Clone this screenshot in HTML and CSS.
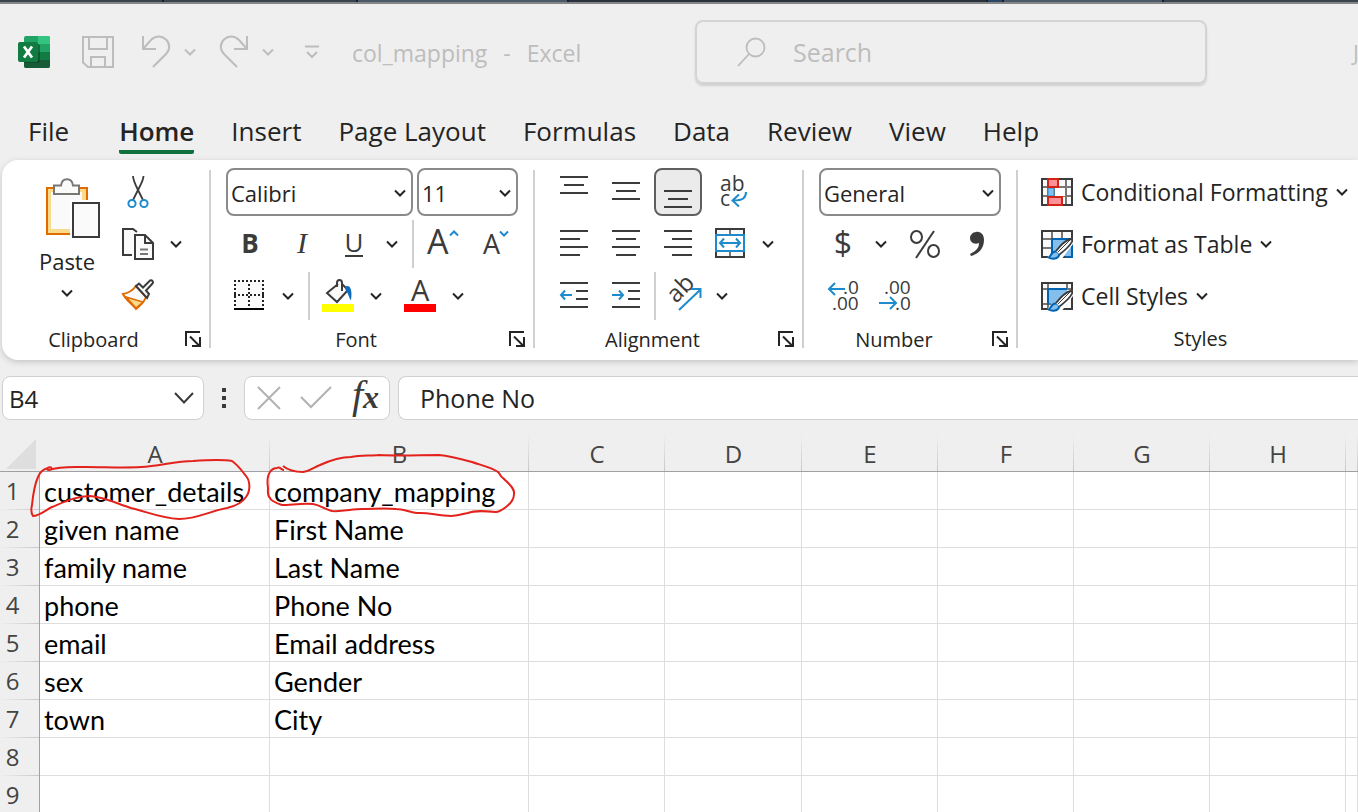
FILE: index.html
```html
<!DOCTYPE html>
<html lang="en">
<head>
<meta charset="utf-8">
<title>col_mapping - Excel</title>
<link rel="stylesheet" href="styles.css">
</head>
<body>
<svg class="defs" aria-hidden="true">
  <symbol id="chev" viewBox="0 0 12 12"><path d="M1 3.5 6 8.5 11 3.5" fill="none" stroke="currentColor" stroke-width="2"/></symbol>
  <symbol id="launch" viewBox="0 0 16 16"><path d="M1 15V1H15M5 5.500l9 9M15 6v9H7" fill="none" stroke="currentColor" stroke-width="2"/></symbol>
  <symbol id="brush" viewBox="0 0 26 22">
    <path d="M25 0 8 14 1 18 0 22H14L26 6Z" fill="#fff"/>
    <path d="M1.500 19.500C4 19 4 13.500 8.500 13.500 12 13.500 13 17 11 19 9 21.200 4 21 1.500 19.500Z" fill="#83beec" stroke="#0063b1" stroke-width="2"/>
    <path d="M9 13C13 8 19 2 23.500 1 25 1 25.500 2 25 3.500 23 8 17 13 12.500 16.500" fill="#fff" stroke="#3b3b3b" stroke-width="1.800"/>
    <path d="M11 14 23 2" stroke="#3b3b3b" stroke-width="1"/>
  </symbol>
</svg>

<div class="backdrop"><i class="seg seg-a"></i><i class="seg seg-b"></i><i class="seg seg-c"></i><i class="seg seg-d"></i><i class="seg seg-e"></i><i class="seg seg-f"></i><i class="seg seg-g"></i></div>

<header class="titlebar">
  <svg class="logo" viewBox="0 0 32 32" role="img" aria-label="Excel">
    <rect x="6" width="26" height="32" rx="2" fill="#21a366"/>
    <path d="M20 0h10a2 2 0 0 1 2 2v6H20z" fill="#33c481"/>
    <path d="M6 8h14v8H6z" fill="#107c41"/><path d="M20 8h12v8H20z" fill="#21a366"/>
    <path d="M6 16h26v8H6z" fill="#107c41"/><path d="M6 24h26v6a2 2 0 0 1-2 2H8a2 2 0 0 1-2-2z" fill="#185c37"/>
    <path d="M6 8h14a2 2 0 0 1 2 2v15a2 2 0 0 1-2 2H6z" fill="#0d3b23" opacity=".55"/>
    <rect y="6" width="20" height="20" rx="2" fill="#107c41"/>
    <path d="M6 10.500 14 21.500M14 10.500 6 21.500" stroke="#fff" stroke-width="2.800"/>
  </svg>
  <button class="quick quick-save" aria-label="Save"><svg width="32" height="32" viewBox="0 0 32 32"><path d="M1 1H31V31H6L1 26.500ZM7 1V13H25V1M9 31V21H23V31" fill="none" stroke="currentColor" stroke-width="2"/></svg></button>
  <button class="quick" aria-label="Undo"><svg width="30" height="34" viewBox="0 0 30 34"><path d="M2 1V14H15M2 14 10 5C15 0 21 1 25 4.500 29.500 9 29 15 25 19L12 32" fill="none" stroke="currentColor" stroke-width="2"/></svg></button>
  <button class="quick-more" aria-label="Undo list"><svg width="12" height="12"><use href="#chev"/></svg></button>
  <button class="quick" aria-label="Redo"><svg width="30" height="34" viewBox="0 0 30 34"><path d="M28 1V14H15M28 14 20 5C15 0 9 1 5 4.500 .5 9 1 15 5 19L18 32" fill="none" stroke="currentColor" stroke-width="2"/></svg></button>
  <button class="quick-more" aria-label="Redo list"><svg width="12" height="12"><use href="#chev"/></svg></button>
  <button class="quick customize" aria-label="Customize toolbar"><svg width="14" height="14" viewBox="0 0 14 14"><path d="M0 1.500H14M2 7 7 12 12 7" fill="none" stroke="currentColor" stroke-width="2"/></svg></button>
  <div class="doc-title"><span>col_mapping</span><span>-</span><span>Excel</span></div>
  <label class="search">
    <svg width="30" height="30" viewBox="0 0 30 30"><circle cx="18.500" cy="10.500" r="9" fill="none" stroke="currentColor" stroke-width="1.800"/><path d="M12 17 1 29" stroke="currentColor" stroke-width="1.800"/></svg>
    <input type="text" placeholder="Search" aria-label="Search">
  </label>
  <span class="user">J</span>
</header>

<nav class="tabs">
  <a href="#">File</a><a href="#" class="active">Home</a><a href="#">Insert</a><a href="#">Page Layout</a><a href="#">Formulas</a><a href="#">Data</a><a href="#">Review</a><a href="#">View</a><a href="#">Help</a>
</nav>

<section class="ribbon">
  <div class="group">
    <div class="body clip-body">
      <button class="paste">
        <svg width="56" height="60" viewBox="0 0 56 60"><path d="M3 10H43V56H3Z" fill="#fadb8c" stroke="#e06c00" stroke-width="2"/><path d="M7 14H38V51H7Z" fill="#fafafa"/><path d="M10 7.500H17C18-1 28-1 29 7.500H35V16H10Z" fill="#fafafa" stroke="#797774" stroke-width="2"/><path d="M26 22H56V60H26Z" fill="#fff"/><path d="M29 25H55V59H29Z" fill="#fafafa" stroke="#3b3b3b" stroke-width="2"/></svg>
        <span>Paste</span>
        <svg width="12" height="12"><use href="#chev"/></svg>
      </button>
      <div class="rows">
        <div class="row"><button class="tool" aria-label="Cut"><svg width="22" height="32" viewBox="0 0 22 32"><path d="M6 0C6 4 8 8 11 14L16 24M16.500 0C16.500 4 14 8 11 14L6 24" fill="none" stroke="#3b3b3b" stroke-width="1.800"/><circle cx="5" cy="27.500" r="3.600" fill="#fff" stroke="#1e8bcd" stroke-width="2"/><circle cx="17" cy="27.500" r="3.600" fill="#fff" stroke="#1e8bcd" stroke-width="2"/></svg></button></div>
        <div class="row"><div class="split"><button class="tool" aria-label="Copy"><svg width="32" height="32" viewBox="0 0 32 32"><path d="M10 27H1V1H11L15 4" fill="#fafafa" stroke="#3b3b3b" stroke-width="2"/><path d="M13 7H23L31 15V31H13Z" fill="#fafafa" stroke="#3b3b3b" stroke-width="2"/><path d="M23 7V15H31" fill="none" stroke="#3b3b3b" stroke-width="2"/><path d="M18 21.500H26M18 26H26" stroke="#797774" stroke-width="2"/></svg></button><button class="more" aria-label="Copy options"><svg width="12" height="12"><use href="#chev"/></svg></button></div></div>
        <div class="row"><button class="tool" aria-label="Format Painter"><svg width="32" height="32" viewBox="0 0 32 32"><path d="M1 14C7 13 11 10 14 6L24 17C22 22 18 26 14 29 10 24 4 20 1 14Z" fill="#fafafa" stroke="#e06c00" stroke-width="2"/><path d="M4 17 21 22 14 28Z" fill="#fadb8c" stroke="#e06c00" stroke-width="1.500"/><path d="M14 6 17 3.500 21 7.500 28 .5C30-.5 32 2 30.500 3.500L24 10.500 27 14 25 18Z" fill="#fafafa" stroke="#3b3b3b" stroke-width="2"/></svg></button></div>
      </div>
    </div>
    <div class="foot foot-clip"><span>Clipboard</span><button aria-label="Clipboard settings"><svg width="16" height="16"><use href="#launch"/></svg></button></div>
  </div>
  <div class="divider"></div>

  <div class="group">
    <div class="body rows">
      <div class="row">
        <div class="pick pick-font"><select aria-label="Font"><option>Calibri</option></select><svg width="12" height="12"><use href="#chev"/></svg></div>
        <div class="pick pick-size"><select aria-label="Font size"><option>11</option></select><svg width="12" height="12"><use href="#chev"/></svg></div>
      </div>
      <div class="row">
        <button class="tool glyph bold">B</button>
        <button class="tool glyph italic">I</button>
        <div class="split"><button class="tool glyph"><span class="under">U</span></button><button class="more" aria-label="Underline options"><svg width="12" height="12"><use href="#chev"/></svg></button></div>
        <i class="rule"></i>
        <button class="tool" aria-label="Increase font size"><svg width="32" height="32" viewBox="0 0 32 32"><text x="1" y="26" font-size="34">A</text><path d="M24 7.500 28 3.500 32 7.500" fill="none" stroke="#1e8bcd" stroke-width="2"/></svg></button>
        <button class="tool" aria-label="Decrease font size"><svg width="32" height="32" viewBox="0 0 32 32"><text x="5" y="26" font-size="27">A</text><path d="M22 3.500 26 7.500 30 3.500" fill="none" stroke="#1e8bcd" stroke-width="2"/></svg></button>
      </div>
      <div class="row">
        <div class="split"><button class="tool" aria-label="Borders"><svg width="32" height="32" viewBox="0 0 32 32"><path d="M1 1H29V28H1Z" fill="#fafafa"/><path d="M0 1H30M0 15H30" stroke="#222" stroke-width="2" stroke-dasharray="2 2"/><path d="M1 4V27M15 4V27M29 4V27" stroke="#222" stroke-width="2" stroke-dasharray="2 2"/><path d="M0 29H30" stroke="#000" stroke-width="2"/></svg></button><button class="more" aria-label="Border options"><svg width="12" height="12"><use href="#chev"/></svg></button></div>
        <i class="rule"></i>
        <div class="split"><button class="tool" aria-label="Fill color"><svg width="32" height="32" viewBox="0 0 32 32"><path d="M16 4 5 13 15 22 26 10 20 4" fill="#fafafa" stroke="#3b3b3b" stroke-width="2"/><path d="M15 7V3C15-1 20-1 20 3V11" fill="none" stroke="#3b3b3b" stroke-width="2"/><path d="M23 7C27 4 31 8 29 20 27 19 27 14 24 11Z" fill="#0f6cbd"/><path d="M0 24H32V32H0Z" fill="#ff0"/></svg></button><button class="more" aria-label="Fill color options"><svg width="12" height="12"><use href="#chev"/></svg></button></div>
        <div class="split"><button class="tool" aria-label="Font color"><svg width="32" height="32" viewBox="0 0 32 32"><text x="7" y="21" font-size="29">A</text><path d="M0 24H32V32H0Z" fill="#f00"/></svg></button><button class="more" aria-label="Font color options"><svg width="12" height="12"><use href="#chev"/></svg></button></div>
      </div>
    </div>
    <div class="foot"><span>Font</span><button aria-label="Font settings"><svg width="16" height="16"><use href="#launch"/></svg></button></div>
  </div>
  <div class="divider"></div>

  <div class="group">
    <div class="body rows align-body">
      <div class="row">
        <button class="tool" aria-label="Top align"><svg width="32" height="32" viewBox="0 0 32 32"><path d="M2 1H30M6 9H26M2 17H30" stroke="#3b3b3b" stroke-width="2"/></svg></button>
        <button class="tool" aria-label="Middle align"><svg width="32" height="32" viewBox="0 0 32 32"><path d="M2 7H30M6 15H26M2 23H30" stroke="#3b3b3b" stroke-width="2"/></svg></button>
        <button class="tool pressed" aria-label="Bottom align" aria-pressed="true"><svg width="32" height="32" viewBox="0 0 32 32"><path d="M2 15H30M6 23H26M2 31H30" stroke="#3b3b3b" stroke-width="2"/></svg></button>
        <button class="tool" aria-label="Wrap text"><svg width="32" height="32" viewBox="0 0 32 32"><text x="6" y="15" font-size="21">ab</text><text x="6" y="30" font-size="21">c</text><path d="M32 16C32 22 29 24.500 19 24.500M25 18.500 18.500 24.500 25 30.500" fill="none" stroke="#1e8bcd" stroke-width="2"/></svg></button>
      </div>
      <div class="row">
        <button class="tool" aria-label="Align left"><svg width="32" height="32" viewBox="0 0 32 32"><path d="M2 3H30M2 11H22M2 19H30M2 27H22" stroke="#3b3b3b" stroke-width="2"/></svg></button>
        <button class="tool" aria-label="Center"><svg width="32" height="32" viewBox="0 0 32 32"><path d="M2 3H30M6 11H26M2 19H30M6 27H26" stroke="#3b3b3b" stroke-width="2"/></svg></button>
        <button class="tool" aria-label="Align right"><svg width="32" height="32" viewBox="0 0 32 32"><path d="M2 3H30M10 11H30M2 19H30M10 27H30" stroke="#3b3b3b" stroke-width="2"/></svg></button>
        <div class="split"><button class="tool" aria-label="Merge and center"><svg width="32" height="32" viewBox="0 0 32 32"><path d="M2 1H30V29H2Z" fill="#fafafa" stroke="#3b3b3b" stroke-width="2"/><path d="M16 2V28" stroke="#797774" stroke-width="2"/><path d="M2 7H30V23H2Z" fill="#fff" stroke="#1e8bcd" stroke-width="2"/><path d="M6 15H26M10 10.500 6 15 10 19.500M22 10.500 26 15 22 19.500" fill="none" stroke="#1e8bcd" stroke-width="2"/></svg></button><button class="more" aria-label="Merge options"><svg width="12" height="12"><use href="#chev"/></svg></button></div>
      </div>
      <div class="row">
        <button class="tool" aria-label="Decrease indent"><svg width="32" height="32" viewBox="0 0 32 32"><path d="M2 3H30M18 11H30M18 19H30M2 27H30" stroke="#3b3b3b" stroke-width="2"/><path d="M14 15H3M7 10.500 3 15 7 19.500" fill="none" stroke="#1e8bcd" stroke-width="2"/></svg></button>
        <button class="tool" aria-label="Increase indent"><svg width="32" height="32" viewBox="0 0 32 32"><path d="M2 3H30M18 11H30M18 19H30M2 27H30" stroke="#3b3b3b" stroke-width="2"/><path d="M2 15H13M9 10.500 13 15 9 19.500" fill="none" stroke="#1e8bcd" stroke-width="2"/></svg></button>
        <i class="rule"></i>
        <div class="split"><button class="tool" aria-label="Orientation"><svg width="36" height="32" viewBox="0 0 36 32"><text x="0" y="0" font-size="24" transform="translate(10 24) rotate(-45)">ab</text><path d="M13 30 34 10M25 9H34.500V18" fill="none" stroke="#1e8bcd" stroke-width="2"/></svg></button><button class="more" aria-label="Orientation options"><svg width="12" height="12"><use href="#chev"/></svg></button></div>
      </div>
    </div>
    <div class="foot"><span>Alignment</span><button aria-label="Alignment settings"><svg width="16" height="16"><use href="#launch"/></svg></button></div>
  </div>
  <div class="divider"></div>

  <div class="group">
    <div class="body rows">
      <div class="row"><div class="pick pick-number"><select aria-label="Number format"><option>General</option></select><svg width="12" height="12"><use href="#chev"/></svg></div></div>
      <div class="row">
        <div class="split"><button class="tool glyph money">$</button><button class="more" aria-label="Currency options"><svg width="12" height="12"><use href="#chev"/></svg></button></div>
        <button class="tool" aria-label="Percent style"><svg width="32" height="32" viewBox="0 0 32 32"><ellipse cx="7.500" cy="9" rx="5.500" ry="6" fill="none" stroke="#3b3b3b" stroke-width="2"/><ellipse cx="24.500" cy="23" rx="5.500" ry="6" fill="none" stroke="#3b3b3b" stroke-width="2"/><path d="M25 3 7 30" stroke="#3b3b3b" stroke-width="2"/></svg></button>
        <button class="tool" aria-label="Comma style"><svg width="16" height="26" viewBox="0 0 16 26"><path d="M7 1C12 0 15 4 15 9 15 18 9 23 2 25L1 23C7 20 10 17 10 12 5 14 1 11 1 7 1 4 4 1 7 1Z" fill="#3b3b3b"/></svg></button>
      </div>
      <div class="row">
        <button class="tool" aria-label="Increase decimal"><svg width="32" height="32" viewBox="0 0 32 32"><text x="16" y="14" font-size="19">.0</text><text x="5" y="30" font-size="19">.00</text><path d="M18 9H2M8 3 2 9 8 15" fill="none" stroke="#1e8bcd" stroke-width="2"/></svg></button>
        <button class="tool" aria-label="Decrease decimal"><svg width="32" height="32" viewBox="0 0 32 32"><text x="5" y="14" font-size="19">.00</text><text x="16" y="30" font-size="19">.0</text><path d="M0 23H17M11 17 17 23 11 29" fill="none" stroke="#1e8bcd" stroke-width="2"/></svg></button>
      </div>
    </div>
    <div class="foot"><span>Number</span><button aria-label="Number settings"><svg width="16" height="16"><use href="#launch"/></svg></button></div>
  </div>
  <div class="divider"></div>

  <div class="group styles-group">
    <div class="body rows styles-body">
      <button class="wide"><svg width="32" height="32" viewBox="0 0 32 32"><path d="M1 3H31V29H1Z" fill="#fafafa"/><path d="M2 11H30M2 20H30M7 3V29M13 3V29M25 3V29" stroke="#797774" stroke-width="2"/><path d="M14 12H24V20H14Z" fill="#fff"/><path d="M7 12H13V20H7Z" fill="#83beec" stroke="#1e8bcd" stroke-width="1"/><path d="M1 3H31V29H1Z" fill="none" stroke="#3b3b3b" stroke-width="2"/><path d="M7 3H17V11H7ZM7 21H21V29H7Z" fill="#ff9199" stroke="#d42314" stroke-width="2"/></svg><span>Conditional Formatting</span><svg width="12" height="12"><use href="#chev"/></svg></button>
      <button class="wide"><svg width="32" height="32" viewBox="0 0 32 32"><path d="M1 3H31V29H1Z" fill="#fafafa"/><path d="M11 11H31V29H11Z" fill="#83beec"/><path d="M2 11H11M2 20H11M11 3V11M21 3V11" stroke="#797774" stroke-width="2"/><path d="M1 29V3H31V29Z" fill="none" stroke="#3b3b3b" stroke-width="2"/><path d="M11 29V11H31M31 17V29H24" fill="none" stroke="#0063b1" stroke-width="2"/><use href="#brush" x="6" y="10" width="26" height="22"/></svg><span>Format as Table</span><svg width="12" height="12"><use href="#chev"/></svg></button>
      <button class="wide"><svg width="32" height="32" viewBox="0 0 32 32"><path d="M1 3H31V29H1Z" fill="#fafafa"/><path d="M7 9H26V25H7Z" fill="#83beec"/><path d="M2 9H30M2 24H10M7 3V28M26 3V9" stroke="#797774" stroke-width="2"/><path d="M1 29V3H31V29Z" fill="none" stroke="#3b3b3b" stroke-width="2"/><path d="M7 25V9H26" fill="none" stroke="#0063b1" stroke-width="2"/><use href="#brush" x="6" y="10" width="26" height="22"/></svg><span>Cell Styles</span><svg width="12" height="12"><use href="#chev"/></svg></button>
    </div>
    <div class="foot foot-plain"><span>Styles</span></div>
  </div>
</section>

<section class="formula-bar">
  <div class="name-box"><input type="text" value="B4" aria-label="Name box"><button aria-label="Cell names"><svg width="20" height="12" viewBox="0 0 20 12"><path d="M1 1 10 10.500 19 1" fill="none" stroke="#3b3b3b" stroke-width="2"/></svg></button></div>
  <svg class="dots" width="4" height="20" viewBox="0 0 4 20"><path d="M0 0h4v4H0zM0 8h4v4H0zM0 16h4v4H0z" fill="#3b3b3b"/></svg>
  <div class="entry">
    <button aria-label="Cancel"><svg width="24" height="24" viewBox="0 0 24 24"><path d="M1 1 23 23M23 1 1 23" stroke="#b4b2b0" stroke-width="2"/></svg></button>
    <button aria-label="Enter"><svg width="32" height="24" viewBox="0 0 32 24"><path d="M1 11 11 21 31 1" fill="none" stroke="#b4b2b0" stroke-width="2"/></svg></button>
    <button class="fx"><span>f</span><b>x</b></button>
  </div>
  <input class="formula" type="text" value="Phone No" aria-label="Formula">
</section>

<main class="sheet">
  <table>
    <colgroup><col class="c-num"><col class="c-a"><col class="c-b"><col class="c-std"><col class="c-wide"><col class="c-std"><col class="c-std"><col class="c-std"><col class="c-std"><col></colgroup>
    <thead><tr><th class="corner"><svg width="30" height="30" viewBox="0 0 30 30"><path d="M30 0V30H0Z" fill="#dedede"/></svg></th><th>A</th><th>B</th><th>C</th><th>D</th><th>E</th><th>F</th><th>G</th><th>H</th><th></th></tr></thead>
    <tbody>
      <tr><th>1</th><td>customer_details</td><td>company_mapping</td><td></td><td></td><td></td><td></td><td></td><td></td><td></td></tr>
      <tr><th>2</th><td>given name</td><td>First Name</td><td></td><td></td><td></td><td></td><td></td><td></td><td></td></tr>
      <tr><th>3</th><td>family name</td><td>Last Name</td><td></td><td></td><td></td><td></td><td></td><td></td><td></td></tr>
      <tr><th>4</th><td>phone</td><td>Phone No</td><td></td><td></td><td></td><td></td><td></td><td></td><td></td></tr>
      <tr><th>5</th><td>email</td><td>Email address</td><td></td><td></td><td></td><td></td><td></td><td></td><td></td></tr>
      <tr><th>6</th><td>sex</td><td>Gender</td><td></td><td></td><td></td><td></td><td></td><td></td><td></td></tr>
      <tr><th>7</th><td>town</td><td>City</td><td></td><td></td><td></td><td></td><td></td><td></td><td></td></tr>
      <tr><th>8</th><td></td><td></td><td></td><td></td><td></td><td></td><td></td><td></td><td></td></tr>
      <tr><th>9</th><td></td><td></td><td></td><td></td><td></td><td></td><td></td><td></td><td></td></tr>
    </tbody>
  </table>
  <svg class="ink" width="540" height="100" viewBox="0 434 540 100" aria-hidden="true">
    <path d="M52 468C48 466 45 470 49 470C60 466 72 467 86 467C105 467 125 468 141 467C160 466 175 461 193 461C206 460 222 459 232 461C238 465 242 471 246 476C251 482 250 492 246 497C242 503 236 506 227 508C210 511 197 519 179 519C160 518 148 512 131 508C118 504 104 497 90 496C76 496 64 502 52 507C46 510 39 516 33 516C31 513 31 509 32 505C33 495 34 486 38 477C40 472 43 469 48 468"/>
    <path d="M283 466C288 470 295 472 303 472C310 471 314 467 320 465C331 460 340 457 351 457C360 455 370 456 379 455C400 456 420 455 439 455C450 456 461 459 472 462C480 465 491 467 498 472C501 475 500 476 503 478C508 483 515 488 514 494C514 500 510 504 506 507C502 510 499 512 496 512C485 511 475 510 468 513C462 514 457 516 451 516C438 516 428 512 417 513C410 512 403 509 396 509C385 508 373 509 362 509C352 509 342 512 332 511C324 509 320 505 313 504C302 503 291 505 282 505C276 503 271 501 270 498C267 495 268 491 268 488C267 481 267 476 270 472C272 469 274 468 277 468C280 466 281 470 284 470"/>
  </svg>
</main>
</body>
</html>
```
FILE: styles.css
```css
* { box-sizing: border-box; }
body {
  margin: 0;
  background: #efefef;
  color: #242424;
  font-family: "Open Sans", "Noto Sans", sans-serif;
  font-size: 22px;
  overflow: hidden;
}
button, input, select { font: inherit; color: inherit; border: 0; background: none; padding: 0; margin: 0; }
svg { display: block; flex: none; overflow: visible; }
svg text { fill: #3b3b3b; font-family: "Open Sans", sans-serif; font-weight: 400; }
.defs { position: absolute; width: 0; height: 0; }

.backdrop { display: flex; gap: 2px; height: 4px; background: #14202f; border-bottom: 2px solid #868686; }
.seg { background: #3a444e; }
.seg-a { flex: 162 0 0; }
.seg-b { flex: 192 0 0; }
.seg-c { flex: 209 0 0; background: #4b5a68; }
.seg-d { flex: 417 0 0; background: #29323c; }
.seg-e { flex: 14 0 0; background: #2c4668; }
.seg-f { flex: 158 0 0; background: #4b5a68; }
.seg-g { flex: 194 0 0; }

.titlebar { display: flex; align-items: center; height: 96px; padding-left: 18px; color: #bdbdbd; overflow: hidden; }
.logo { width: 32px; height: 32px; }
.quick, .quick-more { display: flex; align-items: center; justify-content: center; height: 48px; flex: none; }
.quick { width: 48px; }
.quick-save { margin: 0 10px 0 24px; }
.quick-more { width: 20px; }
.quick-more + .quick { margin-left: 10px; }
.doc-title { display: flex; gap: 16px; width: 343px; margin-left: 16px; padding-top: 2px; flex: none; font-size: 23px; }
.search {
  display: flex; align-items: center; gap: 26px; flex: none;
  width: 512px; height: 64px; padding: 0 40px;
  border: 2px solid #d4d4d4; border-radius: 8px; box-shadow: 0 2px 2px #d0d0d0;
}
.search input { flex: 1; min-width: 0; font-size: 25px; outline: 0; }
.search input::placeholder { color: #bdbdbd; opacity: 1; }
.user { margin-left: 146px; flex: none; }

.tabs { display: flex; gap: 37px; height: 60px; padding: 12px 28px 0; font-size: 26px; }
.tabs a { color: inherit; text-decoration: none; line-height: 38px; height: 42px; white-space: nowrap; }
.tabs .active { font-weight: 600; border-bottom: 4px solid #0f703b; border-radius: 2px; margin-left: 13px; }

.ribbon { display: flex; height: 200px; margin-left: 2px; background: #fff; border-radius: 16px 0 0 16px; box-shadow: 0 2px 6px #c4c4c4; overflow: clip; overflow-clip-margin: 8px; }
.group { display: flex; flex-direction: column; justify-content: space-between; padding: 8px 0 5px; flex: none; }
.divider { width: 2px; margin: 10px 0 12px; background: #d0d0d0; flex: none; }
.body { padding: 0 15px; }
.clip-body { display: flex; padding-right: 17px; }
.align-body { padding-right: 18px; }
.rows { display: flex; flex-direction: column; gap: 4px; }
.row { display: flex; gap: 4px; height: 48px; }
.tool, .more { display: flex; align-items: center; justify-content: center; height: 48px; }
.tool { width: 48px; }
.more { width: 28px; }
.split { display: flex; padding-right: 2px; }
.rule { width: 2px; background: #d0d0d0; }
.pressed { background: #ebebeb; border: 2px solid #5f5f5f; border-radius: 8px; }
.glyph { font-size: 26px; line-height: 32px; color: #3b3b3b; padding-bottom: 3px; }
.bold { font-weight: 700; }
.italic { font-family: "Liberation Serif", serif; font-style: italic; font-size: 30px; }
.money { font-size: 32px; }
.under { border-bottom: 2px solid #3b3b3b; line-height: 26px; }
.paste { display: flex; flex-direction: column; align-items: center; width: 97px; padding: 10px 0 0 3px; }
.paste svg:first-child { align-self: flex-end; margin-right: 14px; }
.paste span { margin: 8px 0 11px; line-height: 30px; }
.pick { position: relative; height: 48px; }
.pick select { width: 100%; height: 100%; padding: 2px 3px 0; appearance: none; border: 2px solid #8a8a8a; border-radius: 8px; background: #fff; }
.pick svg { position: absolute; right: 7px; top: 19px; pointer-events: none; }
.pick-font { width: 187px; }
.pick-size { width: 101px; }
.pick-number { width: 182px; }
.foot { display: grid; grid-template-columns: 1fr 32px; align-items: center; text-align: center; height: 32px; font-size: 20px; }
.foot button { display: flex; justify-content: center; }
.foot-clip { padding-left: 8px; }
.styles-group { flex: 1; }
.styles-body { padding-left: 23px; }
.wide { display: flex; align-items: center; gap: 8px; height: 48px; white-space: nowrap; font-size: 23px; }
.foot-plain { display: block; padding-left: 20px; line-height: 32px; }

.formula-bar { display: flex; align-items: center; padding: 16px 0 0 2px; font-size: 25px; }
.name-box, .entry, .formula { height: 44px; background: #fff; border: 1px solid #d0d0d0; border-radius: 8px; }
.name-box { display: flex; align-items: center; width: 202px; padding: 0 9px 0 6px; font-size: 24px; }
.name-box input { flex: 1; min-width: 0; }
.dots { margin: 0 18px 0 18px; }
.entry { display: flex; align-items: center; width: 146px; padding: 0 10px 0 12px; justify-content: space-between; }
.fx { display: flex; align-items: baseline; font: italic 400 40px/40px "Liberation Serif", serif; color: #3b3b3b; padding-bottom: 4px; }
.fx b { font-size: 32px; }
.formula { flex: 1; min-width: 0; margin-left: 8px; padding: 0 21px; border-right: 0; border-radius: 8px 0 0 8px; }

.sheet { position: relative; margin-top: 14px; font-family: Lato, "Open Sans", sans-serif; color: #000; }
table { width: 100%; table-layout: fixed; border-collapse: separate; border-spacing: 0; }
.c-num { width: 40px; }
.c-a { width: 230px; }
.c-b { width: 259px; }
.c-std { width: 136px; }
.c-wide { width: 137px; }
th { font-family: "Open Sans", sans-serif; font-weight: 400; color: #444; padding: 0; font-size: 24px; }
thead th { height: 38px; line-height: 34px; padding-top: 3px; border-bottom: 1px solid #a0a0a0; background: linear-gradient(#efefef, #c8c8c8) right / 1px 100% no-repeat; }
thead .corner { background: none; }
.corner svg { margin-left: 6px; }
tbody th { height: 38px; line-height: 36px; padding-right: 14px; border-right: 1px solid #a0a0a0; background: linear-gradient(90deg, #efefef, #c8c8c8) bottom / 100% 1px no-repeat; }
td { background: #fff; padding: 2px 0 0 4px; height: 38px; line-height: 35px; font-size: 27px; white-space: nowrap; border-right: 1px solid #dedede; border-bottom: 1px solid #dedede; }
.ink { position: absolute; left: 0; top: 0; pointer-events: none; fill: none; stroke: #e3221c; stroke-width: 2; }
```
